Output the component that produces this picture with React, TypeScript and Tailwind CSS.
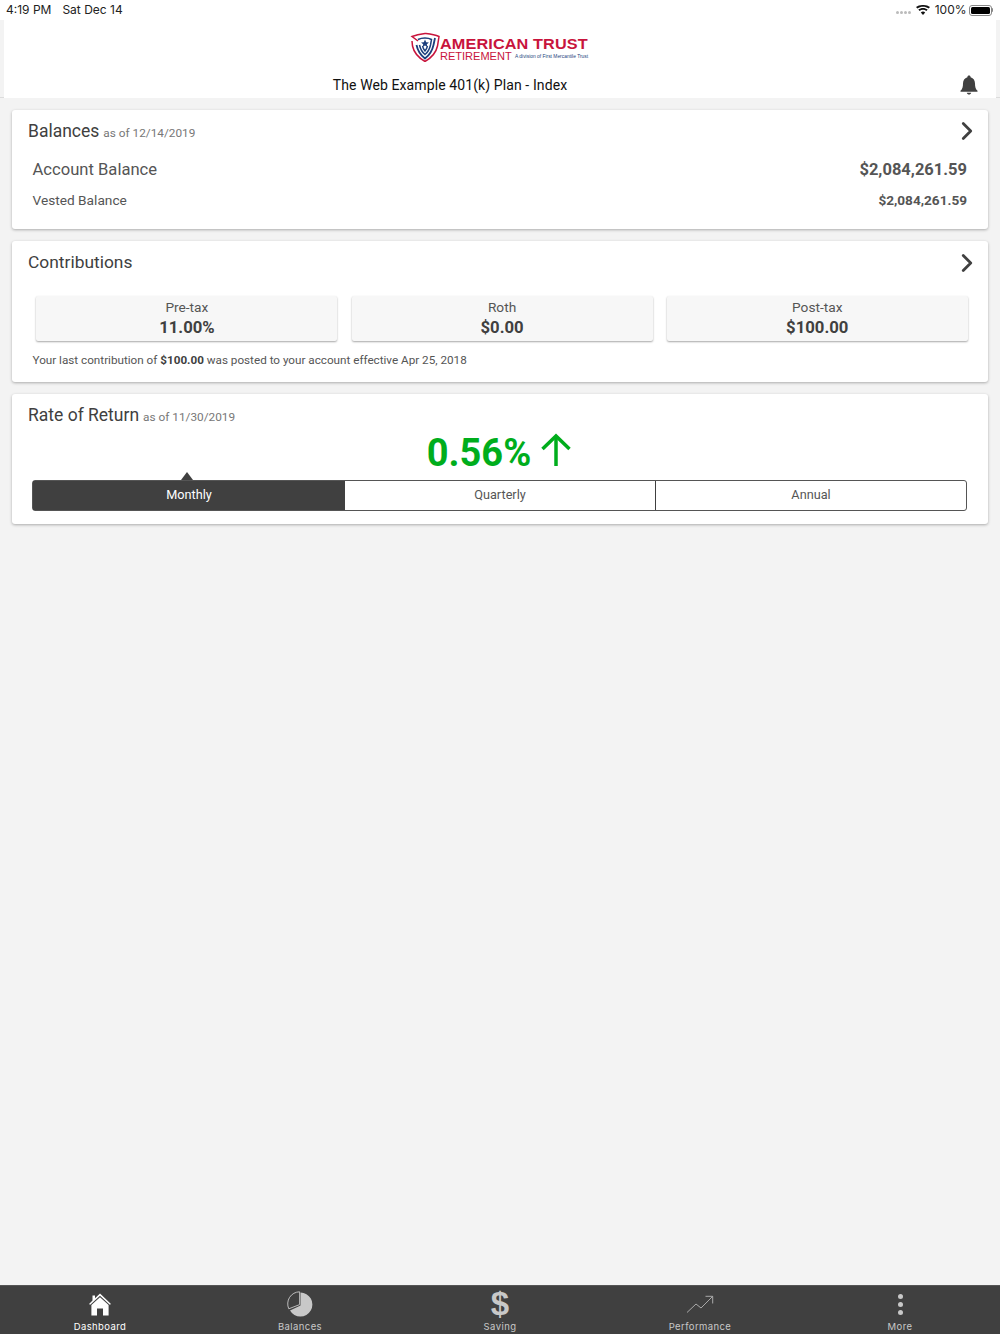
import type { ReactNode } from "react";
import { ChevronRight } from "lucide-react";

const Logo = () => (
  <div className="flex items-center h-[30px]">
    <svg width="30" height="30" viewBox="0 0 30 30" fill="none">
      <path d="M8 9 L2 4.5 C7 2.5 11 2 15 1.5 C19 2 24 2.5 29 4.5 L27.5 14 C26 21 21 26 15 29.5 C9 26 4 21 2.5 14 L2 9" stroke="#c8143c" strokeWidth="1.5" />
      <path d="M6.5 13 C8 20 11 23.5 15 26.5 C19 23.5 22 20 23.5 13 L25 6" stroke="#1c3f7c" strokeWidth="1.8" />
      <path d="M9.5 13 C10.5 17.5 12.5 20.5 15 22.5 C17.5 20.5 19.5 17.5 20.5 13 L21.5 7.5 C18 5.5 12 5.5 8 7.5" stroke="#1c3f7c" strokeWidth="1.5" />
      <path d="M12.5 14 C13 16 14 18 15 19 C16 18 17 16 17.5 14" stroke="#1c3f7c" strokeWidth="1.4" />
      <path d="M15 7.5 L16.2 10.3 L19 10.5 L16.8 12.3 L17.5 15 L15 13.5 L12.5 15 L13.2 12.3 L11 10.5 L13.8 10.3 Z" fill="#1c3f7c" />
    </svg>
    <div className="flex flex-col w-[149px] pt-[5px]">
      <div className="font-['Liberation_Sans',sans-serif] font-bold text-[#c8143c] text-[14.5px] leading-[13px] tracking-[0.1px] whitespace-nowrap scale-x-[1.12] origin-left">AMERICAN TRUST</div>
      <div className="flex items-center h-[10px]">
        <span className="font-['Liberation_Sans',sans-serif] text-[#c8143c] text-[10.5px] leading-[10px] whitespace-nowrap w-[75px] scale-x-[1.05] origin-left">RETIREMENT</span>
        <span className="font-['Liberation_Sans',sans-serif] text-[#1c3f7c] text-[4.9px] leading-[10px] pt-[1px] whitespace-nowrap">A division of First Mercantile Trust</span>
      </div>
    </div>
  </div>
);

const StatusBar = () => (
  <div className="h-[20px] bg-white flex items-center justify-between pl-[6px] pr-[7px] text-[12px] text-[#222] font-['Inter',sans-serif]">
    <div className="flex gap-[11px]">
      <span>4:19 PM</span>
      <span>Sat Dec 14</span>
    </div>
    <div className="flex items-center">
      <div className="flex gap-[1px] mr-[5px] mt-[5px]">
        <i className="w-[3px] h-[3px] rounded-full bg-[#bbb]" />
        <i className="w-[3px] h-[3px] rounded-full bg-[#bbb]" />
        <i className="w-[3px] h-[3px] rounded-full bg-[#bbb]" />
        <i className="w-[3px] h-[3px] rounded-full bg-[#bbb]" />
      </div>
      <svg width="14" height="10" viewBox="0 0 14 10" className="mr-[5px]">
        <path d="M7 10 L4.8 7.4 C6 6.3 8 6.3 9.2 7.4 Z" fill="#111" />
        <path d="M3.6 6.1 L2.3 4.6 C5 2.3 9 2.3 11.7 4.6 L10.4 6.1 C8.4 4.4 5.6 4.4 3.6 6.1 Z" fill="#111" />
        <path d="M1.4 3.5 L0 2 C4 -0.7 10 -0.7 14 2 L12.6 3.5 C9.2 1.2 4.8 1.2 1.4 3.5 Z" fill="#111" />
      </svg>
      <span className="mr-[2px]">100%</span>
      <div className="w-[23px] h-[11px] rounded-[3px] border border-[#888] p-[1px]">
        <div className="w-full h-full bg-black rounded-[1.5px]" />
      </div>
      <div className="w-[1.5px] h-[4px] bg-[#888] rounded-r-sm" />
    </div>
  </div>
);

const Card = ({ className, children }: { className: string; children: ReactNode }) => (
  <section className={`bg-white rounded-[3px] shadow-[0_1px_3px_rgba(0,0,0,0.3)] ${className}`}>{children}</section>
);

const Chevron = () => <ChevronRight size={30} strokeWidth={2.2} className="text-[#404040] -mr-[1px]" />;

const ContributionBox = ({ label, value }: { label: string; value: string }) => (
  <div className="w-[301px] h-[45px] bg-[#f7f7f7] rounded-[2px] shadow-[0_1px_2px_rgba(0,0,0,0.35)] flex flex-col items-center pt-[2px]">
    <span className="text-[13.7px] leading-[18px] text-[#555]">{label}</span>
    <span className="text-[16.7px] leading-[22px] mt-[1px] font-bold text-[#404040]">{value}</span>
  </div>
);

const tabs = [
  {
    label: "Dashboard",
    active: true,
    icon: (
      <svg width="24" height="24" viewBox="0 0 24 24">
        <path d="M12 1.5 L23 12 L21.8 12.8 L12 3.8 L2.2 12.8 L1 12 L4.5 8.6 L4.5 3.5 L7 3.5 L7 6.2 Z" fill="#fff" />
        <path fillRule="evenodd" d="M12 5.2 L20.6 13 L20.6 23.5 L15 23.5 L15 16.5 L9 16.5 L9 23.5 L3.4 23.5 L3.4 13 Z" fill="#fff" />
      </svg>
    ),
  },
  {
    label: "Balances",
    icon: (
      <svg width="26" height="26" viewBox="0 0 26 26">
        <path d="M13.5 1.5 A12 12 0 1 1 3 19.5 L13.5 14.5 Z" fill="#c8c8c8" />
        <path d="M12.6 0.8 L12.6 13.6 L1.8 17.8 A12 12 0 0 1 12.6 0.8 Z" fill="none" stroke="#c8c8c8" strokeWidth="0.9" />
      </svg>
    ),
  },
  {
    label: "Saving",
    icon: <span className="text-[33px] leading-[26px] font-bold text-[#c8c8c8] font-['Liberation_Sans',sans-serif]">$</span>,
  },
  {
    label: "Performance",
    icon: (
      <svg width="28" height="18" viewBox="0 0 28 18" fill="none" stroke="#b5b5b5" strokeWidth="0.9" className="mt-[4px] mb-[4px]">
        <path d="M1 17.5 L10 9 L15 13 L26.5 1.5" />
        <path d="M19.5 1.3 L26.7 1.3 L26.7 8.5" />
      </svg>
    ),
  },
  {
    label: "More",
    icon: (
      <div className="flex flex-col gap-[3px] h-[26px] justify-center">
        <i className="w-[5px] h-[5px] rounded-full bg-[#c8c8c8]" />
        <i className="w-[5px] h-[5px] rounded-full bg-[#c8c8c8]" />
        <i className="w-[5px] h-[5px] rounded-full bg-[#c8c8c8]" />
      </div>
    ),
  },
];

export default function App() {
  return (
    <div className="w-[1000px] h-[1334px] bg-[#f3f3f3] flex flex-col overflow-hidden font-['Roboto',sans-serif]">
      <StatusBar />
      <header className="h-[78px] mx-[4px] bg-white flex flex-col items-center relative pt-[12px]">
        <div className="-ml-[1px]"><Logo /></div>
        <div className="text-[14px] leading-[20px] text-[#111] mt-[13px] -ml-[100px] tracking-[0.1px]">The Web Example 401(k) Plan - Index</div>
        <svg width="18" height="20" viewBox="0 0 18 20" className="absolute right-[18px] top-[55px]">
          <path d="M9 0.5 C10 0.5 10.6 1.2 10.6 2.2 C13.5 3 15 5.5 15 8.5 C15 12 15.6 14 17.5 15.8 L17.5 16.8 L0.5 16.8 L0.5 15.8 C2.4 14 3 12 3 8.5 C3 5.5 4.5 3 7.4 2.2 C7.4 1.2 8 0.5 9 0.5 Z" fill="#404040" />
          <path d="M6.8 17.8 L11.2 17.8 C11 19 10 19.6 9 19.6 C8 19.6 7 19 6.8 17.8 Z" fill="#404040" />
        </svg>
      </header>
      <div className="h-[1px] bg-[#dcdcdc] -mt-[1px]" />

      <main className="flex-1 flex flex-col gap-[12px] pt-[12px] px-[12px]">
        <Card className="h-[119px]">
          <div className="flex items-center justify-between pl-[16px] pr-[7px] h-[42px]">
            <div className="flex items-baseline gap-[4px]">
              <span className="text-[17.5px] text-[#404040]">Balances</span>
              <span className="text-[11.8px] text-[#777]">as of 12/14/2019</span>
            </div>
            <Chevron />
          </div>
          <div className="flex items-center justify-between pl-[20.5px] pr-[21px] h-[37px]">
            <span className="text-[16.6px] text-[#555]">Account Balance</span>
            <span className="text-[16.5px] font-bold text-[#555]">$2,084,261.59</span>
          </div>
          <div className="flex items-center justify-between pl-[20.5px] pr-[21px] h-[22px]">
            <span className="text-[13.7px] text-[#555]">Vested Balance</span>
            <span className="text-[13.6px] font-bold text-[#555]">$2,084,261.59</span>
          </div>
        </Card>

        <Card className="h-[141px]">
          <div className="flex items-center justify-between pl-[16px] pr-[7px] h-[43px]">
            <span className="text-[17.4px] text-[#404040]">Contributions</span>
            <Chevron />
          </div>
          <div className="flex gap-[14.2px] pl-[24.4px] pt-[12px]">
            <ContributionBox label="Pre-tax" value="11.00%" />
            <ContributionBox label="Roth" value="$0.00" />
            <ContributionBox label="Post-tax" value="$100.00" />
          </div>
          <p className="text-[11.7px] leading-[16px] text-[#555] pl-[20.5px] mt-[11px]">
            Your last contribution of <b className="text-[#404040]">$100.00</b> was posted to your account effective Apr 25, 2018
          </p>
        </Card>

        <Card className="h-[130px]">
          <div className="flex items-baseline gap-[4px] pl-[16px] pt-[9px] h-[31px]">
            <span className="text-[17.5px] leading-[24px] text-[#404040]">Rate of Return</span>
            <span className="text-[11.8px] text-[#777]">as of 11/30/2019</span>
          </div>
          <div className="flex justify-center items-center h-[55px] ml-[-1px]">
            <span className="text-[38px] leading-[44px] font-bold text-[#00ad1c]">0.56%</span>
            <svg width="32" height="34" viewBox="0 0 32 34" fill="none" stroke="#00ad1c" strokeWidth="3.5" className="ml-[9px] mb-[6px]">
              <path d="M16 33 L16 3" />
              <path d="M2.5 16 L16 3 L29.5 16" />
            </svg>
          </div>
          <div className="ml-[20px] mr-[21px] flex h-[31px] relative rounded-[3px] border border-[#555] text-[12.7px] text-[#555]">
            <i className="absolute left-[148px] -top-[9px] border-x-[6.5px] border-x-transparent border-b-[8px] border-b-[#404040]" />
            <div className="w-[312px] pb-[1px] bg-[#404040] text-white flex items-center justify-center">Monthly</div>
            <div className="flex-1 pb-[1px] flex items-center justify-center border-r border-[#404040]">Quarterly</div>
            <div className="flex-1 pb-[1px] flex items-center justify-center">Annual</div>
          </div>
        </Card>
      </main>

      <nav className="h-[49px] bg-[#404040] border-t border-[#555] grid grid-cols-5 shrink-0">
        {tabs.map((tab) => (
          <div key={tab.label} className="flex flex-col items-center pt-[5px]">
            <div className="h-[26px] flex items-center justify-center">{tab.icon}</div>
            <span className={`text-[9.5px] leading-[12px] mt-[4px] tracking-[0.4px] font-['Inter',sans-serif] ${tab.active ? "text-white" : "text-[#c8c8c8]"}`}>{tab.label}</span>
          </div>
        ))}
      </nav>
    </div>
  );
}
